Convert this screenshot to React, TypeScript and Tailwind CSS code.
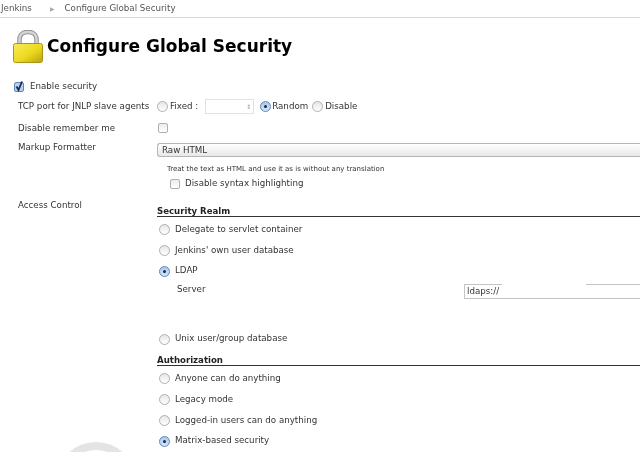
function Radio({ checked = false, className = "" }: { checked?: boolean; className?: string }) {
  if (checked) {
    return (
      <span className={`flex h-[11px] w-[11px] shrink-0 items-center justify-center rounded-full border border-[#5f86b8] bg-linear-to-b from-[#a9c8ea] to-[#d4e6f8] ${className}`}>
        <span className="h-[3px] w-[3px] rounded-full bg-[#1c2a44]" />
      </span>
    );
  }
  return <span className={`h-[11px] w-[11px] shrink-0 rounded-full border border-[#b0b0b0] bg-linear-to-b from-[#e6e6e6] to-white ${className}`} />;
}

function Box() {
  return <span className="h-[10px] w-[10px] shrink-0 rounded-[2px] border border-[#b0b0b0] bg-linear-to-b from-[#ececec] to-white" />;
}

function Choice({ label, checked, height }: { label: string; checked?: boolean; height: string }) {
  return (
    <div className={`flex items-center gap-[5px] pl-[2px] ${height}`}>
      <Radio checked={checked} />
      <span>{label}</span>
    </div>
  );
}

function SectionTitle({ children }: { children: string }) {
  return <div className="h-[14px] border-b border-[#333] pt-[2px] text-[8.6px] leading-[12px] font-bold text-[#222]">{children}</div>;
}

function Lock() {
  return (
    <svg width="30" height="33" viewBox="0 0 30 33" className="shrink-0">
      <defs>
        <linearGradient id="body" x1="0" y1="0" x2="1" y2="1">
          <stop offset="0" stopColor="#f7ec5a" />
          <stop offset="0.55" stopColor="#ecd91e" />
          <stop offset="1" stopColor="#b9a20e" />
        </linearGradient>
      </defs>
      <path d="M6.5 15V9.5C6.5 4.5 10 2 15 2s8.5 2.5 8.5 7.5V15" fill="none" stroke="#8f8f8f" strokeWidth="4.5" />
      <path d="M6.5 15V9.5C6.5 4.5 10 2 15 2s8.5 2.5 8.5 7.5V15" fill="none" stroke="#d4d4d4" strokeWidth="2.5" />
      <rect x="0.5" y="13.5" width="29" height="19" rx="2" fill="url(#body)" stroke="#a8961a" />
    </svg>
  );
}

export default function App() {
  return (
    <div className="relative h-[452px] w-[640px] overflow-hidden bg-white font-['DejaVu_Sans',sans-serif] text-[8.7px] text-[#333] blur-[0.3px]">
      <div className="flex h-[18px] items-center border-b border-[#d8d8d8] text-[#555]">
        <span className="ml-px">Jenkins</span>
        <span className="ml-[18px] text-[6px] text-[#aaa]">▶</span>
        <span className="ml-[10px]">Configure Global Security</span>
      </div>

      <div className="flex h-[59px] items-center gap-[4px] pb-[2px] pl-[13px]">
        <Lock />
        <h1 className="text-[17px] font-bold text-black">Configure Global Security</h1>
      </div>

      <div className="flex h-[19px] items-center gap-[6px] pl-[14px]">
        <span className="flex h-[10px] w-[10px] items-center justify-center rounded-[2px] border border-[#5f86b8] bg-[#b8d0ec]">
          <svg width="10" height="10" viewBox="0 0 10 10" className="overflow-visible">
            <path d="M2.5 4.5l2 3.5L8 -0.5" fill="none" stroke="#1c2a55" strokeWidth="1.8" />
          </svg>
        </span>
        <span>Enable security</span>
      </div>

      <div className="grid grid-cols-[139px_1fr] pl-[18px]">
        <div>
          <div className="flex h-[21px] items-center">TCP port for JNLP slave agents</div>
          <div className="flex h-[22px] items-center pt-px">Disable remember me</div>
          <div className="flex h-[17px] items-center pt-px">Markup Formatter</div>
          <div className="mt-[43px] flex h-[14px] items-center">Access Control</div>
        </div>

        <div>
          <div className="flex h-[21px] items-center">
            <Radio />
            <span className="ml-[2px]">Fixed :</span>
            <span className="ml-[7px] flex h-[15px] w-[49px] items-center justify-end border border-[#e2e2e2] pr-[2px] text-[6px] text-[#999]">⇕</span>
            <Radio checked className="ml-[6px]" />
            <span className="ml-[1px]">Random</span>
            <Radio className="ml-[4px]" />
            <span className="ml-[2px]">Disable</span>
          </div>
          <div className="flex h-[22px] items-center pl-px"><Box /></div>
          <div className="mt-[4px] flex h-[14px] items-center rounded-l-[3px] border border-r-0 border-[#b5b5b5] bg-linear-to-b from-white to-[#e8e8e8] pt-px pl-[4px]">Raw HTML</div>
          <div className="mt-[6px] h-[12px] pl-[10px] text-[7px] leading-[12px]">Treat the text as HTML and use it as is without any translation</div>
          <div className="flex h-[15px] items-center gap-[5px] pt-[2px] pl-[13px]">
            <Box />
            <span>Disable syntax highlighting</span>
          </div>

          <div className="mt-[13px]">
            <SectionTitle>Security Realm</SectionTitle>
          </div>
          <div className="flex flex-col pt-[2px]">
            <Choice label="Delegate to servlet container" height="h-[21px]" />
            <Choice label="Jenkins' own user database" height="h-[21px]" />
            <Choice label="LDAP" checked height="h-[20px]" />
            <div className="flex h-[18px] items-center pl-[20px]">
              <span className="w-[287px]">Server</span>
              <div className="mt-[3px] flex h-[15px] flex-1 items-center border-b border-[#c4c4c4]">
                <span className="flex h-full items-center border-t border-l border-[#c4c4c4] pl-[2px] pr-[3px]">ldaps://</span>
                <span className="ml-[84px] h-full flex-1 border-t border-[#c4c4c4]" />
              </div>
            </div>
            <div className="h-[30px]" />
            <Choice label="Unix user/group database" height="h-[20px]" />
          </div>

          <div className="mt-[3px]">
            <SectionTitle>Authorization</SectionTitle>
          </div>
          <div className="flex flex-col pt-[2px]">
            <Choice label="Anyone can do anything" height="h-[21px]" />
            <Choice label="Legacy mode" height="h-[21px]" />
            <Choice label="Logged-in users can do anything" height="h-[21px]" />
            <Choice label="Matrix-based security" checked height="h-[20px]" />
          </div>
        </div>
      </div>

      <svg width="80" height="12" viewBox="0 0 80 12" className="absolute bottom-0 left-[55px]">
        <circle cx="41" cy="42" r="36" fill="none" stroke="#e4e4e4" strokeWidth="8" />
      </svg>
    </div>
  );
}
